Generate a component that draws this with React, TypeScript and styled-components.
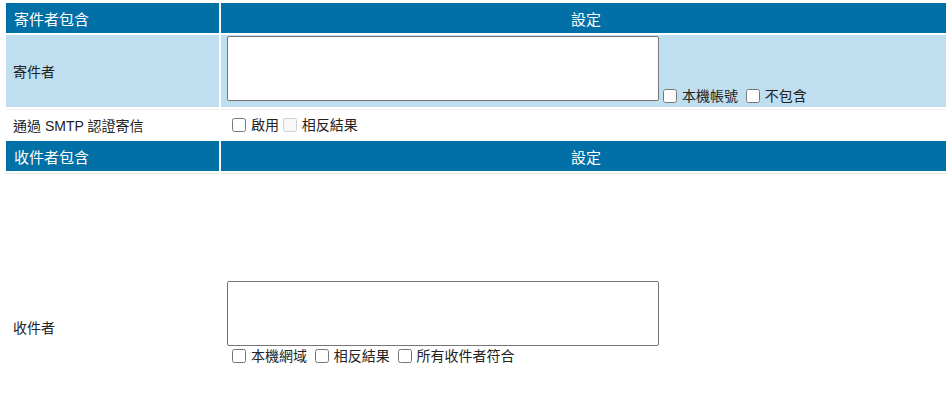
import React from "react";
import styled, { createGlobalStyle } from "styled-components";

const Global = createGlobalStyle`
  html, body { margin: 0; padding: 0; background: #ffffff; }
  body {
    font-family: "Liberation Sans", "Noto Sans CJK TC", sans-serif;
    font-size: 14px;
    color: #222;
  }
`;

const Page = styled.div`
  padding: 3px 0 0 6px;
  width: 940px;
`;

const Grid = styled.div`
  display: grid;
  grid-template-columns: 213px 725px;
  column-gap: 2px;
  row-gap: 2px;
`;

const HeadCell = styled.div<{ $center?: boolean }>`
  background: #0170a7;
  color: #ffffff;
  font-size: 15px;
  height: 30px;
  display: flex;
  align-items: center;
  justify-content: ${(p) => (p.$center ? "center" : "flex-start")};
  padding: ${(p) => (p.$center ? "0 0 0 5px" : "0 8px")};
  box-sizing: border-box;
`;

const LabelCell = styled.div<{ $tone: "blue" | "white"; $h: number }>`
  background: ${(p) => (p.$tone === "blue" ? "#bfdef0" : "#ffffff")};
  border-top: ${(p) => (p.$tone === "white" ? "1px solid #efefea" : "none")};
  height: ${(p) => p.$h}px;
  box-sizing: border-box;
  display: flex;
  align-items: center;
  padding: 0 7px;
`;

const FieldCell = styled.div<{ $tone: "blue" | "white"; $h: number; $lift?: number }>`
  background: ${(p) => (p.$tone === "blue" ? "#bfdef0" : "#ffffff")};
  border-top: ${(p) => (p.$tone === "white" ? "1px solid #efefea" : "none")};
  height: ${(p) => p.$h}px;
  box-sizing: border-box;
  display: flex;
  flex-direction: column;
  justify-content: center;
  padding: 0 6px ${(p) => p.$lift ?? 0}px 6px;
`;

const Line = styled.div`
  line-height: 17px;
  white-space: nowrap;
`;

const Area = styled.textarea<{ $block?: boolean }>`
  width: 432px;
  height: 65px;
  box-sizing: border-box;
  border: 1px solid #767676;
  border-radius: 2px;
  background: #fff;
  margin: 0;
  padding: 2px;
  resize: none;
  vertical-align: baseline;
  display: ${(p) => (p.$block ? "block" : "inline-block")};
  font-family: "Liberation Mono", monospace;
`;

const Check = styled.input.attrs({ type: "checkbox" })`
  width: 14px;
  height: 14px;
  margin: 3px 1px 3px 5px;
  vertical-align: -2px;
`;

const InlineCheck = styled(Check)`
  margin-left: 4px;
`;

export default function App() {
  return (
    <>
      <Global />
      <Page>
        <Grid>
          <HeadCell>寄件者包含</HeadCell>
          <HeadCell $center>設定</HeadCell>

          <LabelCell $tone="blue" $h={72}>寄件者</LabelCell>
          <FieldCell $tone="blue" $h={72}>
            <Line>
              <Area />
              <InlineCheck /> 本機帳號 <InlineCheck /> 不包含
            </Line>
          </FieldCell>

          <LabelCell $tone="white" $h={30}>通過 SMTP 認證寄信</LabelCell>
          <FieldCell $tone="white" $h={30}>
            <Line>
              <Check /> 啟用<InlineCheck disabled /> 相反結果
            </Line>
          </FieldCell>

          <HeadCell>收件者包含</HeadCell>
          <HeadCell $center>設定</HeadCell>

          <LabelCell $tone="white" $h={306}>收件者</LabelCell>
          <FieldCell $tone="white" $h={306} $lift={6}>
            <Area $block />
            <Line>
              <Check /> 本機網域 <InlineCheck /> 相反結果 <InlineCheck /> 所有收件者符合
            </Line>
          </FieldCell>
        </Grid>
      </Page>
    </>
  );
}
